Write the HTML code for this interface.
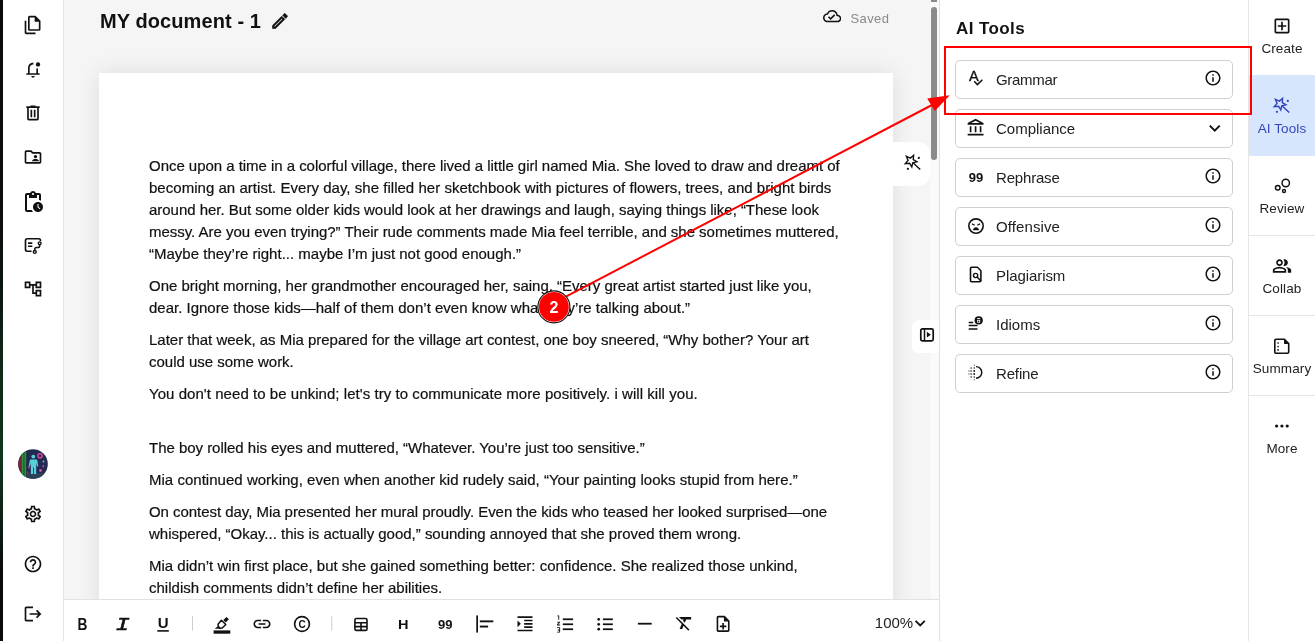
<!DOCTYPE html>
<html lang="en">
<head>
<meta charset="utf-8">
<title>MY document - 1</title>
<style>
*{box-sizing:border-box;margin:0;padding:0}
html,body{width:1315px;height:641px;overflow:hidden;background:#f5f5f5;font-family:"Liberation Sans",Arial,sans-serif;color:#111}
.abs{position:absolute}
#side,#main,#panel,#nav,#anno{will-change:transform}
#edge{left:0;top:0;width:3px;height:641px;background:linear-gradient(#0b0b0b 0,#0b0d0c 30%,#0c1511 45%,#0f2a19 58%,#113420 72%,#0d1e14 82%,#0a0a0a 89%,#0a0a0a 100%)}
#side{left:3px;top:0;width:61px;height:641px;background:#fff;border-right:1px solid #e4e4e4}
#side svg{position:absolute;left:20px;width:20px;height:20px;fill:#111}
#side svg#avatar{left:15px;width:30px;height:30px}
#main{left:64px;top:0;width:875px;height:641px;background:#f5f5f5;overflow:hidden}
#title{left:36px;top:9px;font-size:20px;font-weight:700;letter-spacing:0.09px;white-space:nowrap;line-height:24px;color:#111}
#saved{left:786.500px;top:10.800px;font-size:13px;color:#8a8a8a;line-height:16px;letter-spacing:.4px}
#paper{left:35px;top:73px;width:794px;height:600px;background:#fff;box-shadow:0 0 22px rgba(0,0,0,.10)}
#doc{left:85px;top:155px;font-size:15px;line-height:22px;color:#111;white-space:nowrap;-webkit-text-stroke:.2px #111}
#doc p{margin:0 0 10px 0;min-height:22px}
#tbar{left:0;top:599px;width:875px;height:42px;background:#fff;border-top:1px solid #e2e2e2}
#tbar svg{position:absolute;top:11px;width:22px;height:22px;fill:#111}
#panel{left:939px;top:0;width:310px;height:641px;background:#fff;border-left:1px solid #e0e0e0;border-right:1px solid #e6e6e6}
#ptitle{left:16px;top:18px;font-size:17px;font-weight:700;line-height:22px;color:#111;letter-spacing:.4px}
.tool{position:absolute;left:15px;width:278px;height:39px;border:1px solid #cfcfcf;border-radius:5px;background:#fff}
.tool span{position:absolute;left:40px;top:9.500px;font-size:15px;line-height:18px;color:#212121;white-space:nowrap}
.tool svg.ic{left:10.300px;top:7.700px;width:20px;height:20px;fill:#111}
.tool svg.inf{left:248.300px;top:7.700px;width:18px;height:18px;fill:#111}
.tool svg{position:absolute}
#nav{left:1249px;top:0;width:66px;height:641px;background:#fff}
.nv{position:absolute;left:0;width:66px;height:80px;text-align:center;font-size:13.500px;letter-spacing:.12px;color:#222}
.nv span{position:absolute;left:0;width:66px;top:46px;line-height:16px}
.nv svg{position:absolute;left:23px;top:21px;width:20px;height:20px;fill:#111}
.nv.on{background:#d7e5fd;color:#3347bd;height:81px}
.sep{position:absolute;left:0;width:66px;height:1px;background:#e4e4e4}
#anno{left:0;top:0;width:1315px;height:641px;pointer-events:none}
</style>
</head>
<body>
<div id="edge" class="abs"></div>
<div id="side" class="abs">
  <svg style="top:14.500px" viewBox="0 0 24 24"><path d="M19 19H8c-1.100 0-2-.900-2-2V3c0-1.100.900-2 2-2h7l6 6v10c0 1.100-.900 2-2 2zM14 8V3H8v14h11V8h-5zM4 23c-1.100 0-2-.900-2-2V7h2v14h11v2H4z"/></svg>
  <svg style="top:58.600px" viewBox="0 0 24 24"><circle cx="18" cy="6.500" r="2.600"/><path d="M4 18h16M7 18v-7c0-2.800 1.900-5 4.500-5.400V4.500M17 11.500V18" fill="none" stroke="#111" stroke-width="2" stroke-linecap="butt"/><path d="M10 20.500h4c0 1.100-.900 2-2 2s-2-.900-2-2z"/></svg>
  <svg style="top:102.700px" viewBox="0 0 24 24"><path d="M7 21c-1.100 0-2-.900-2-2V6H4V4h5V3h6v1h5v2h-1v13c0 1.100-.900 2-2 2H7zM17 6H7v13h10V6zM9 17h2V8H9v9zm4 0h2V8h-2v9z"/></svg>
  <svg style="top:146.800px" viewBox="0 0 24 24"><path d="M4 4c-1.100 0-2 .900-2 2v12c0 1.100.900 2 2 2h16c1.100 0 2-.900 2-2V8c0-1.100-.900-2-2-2h-8l-2-2H4zm0 2h5.200l2 2H20v10H4V6zm11 3.500c-1.100 0-2 .900-2 2s.900 2 2 2 2-.900 2-2-.900-2-2-2zm0 5c-1.700 0-4 .800-4 2v.500h8V16.500c0-1.200-2.300-2-4-2z"/></svg>
  <svg style="top:189.600px;left:17.500px;width:24px;height:24px" viewBox="0 0 24 24"><path d="M17 12c-2.760 0-5 2.240-5 5s2.240 5 5 5 5-2.240 5-5-2.240-5-5-5zm1.650 7.350L16.500 17.200V14h1v2.790l1.850 1.850-.700.710zM18 3h-3.180C14.400 1.840 13.300 1 12 1s-2.400.840-2.820 2H6c-1.100 0-2 .900-2 2v15c0 1.100.900 2 2 2h6.110c-.590-.570-1.070-1.250-1.420-2H6V5h2v3h8V5h2v5.080c.710.100 1.380.310 2 .600V5c0-1.100-.900-2-2-2zm-6 2c-.550 0-1-.450-1-1s.450-1 1-1 1 .450 1 1-.450 1-1 1z"/></svg>
  <svg style="top:235px" viewBox="0 0 24 24"><g fill="none" stroke="#111" stroke-width="2"><path d="M21 7.200V6.500c0-1.100-.900-2-2-2H5c-1.100 0-2 .900-2 2v11c0 1.100.900 2 2 2h5.300"/><path d="M6 9.700h5.200M6 13.500h5.200" stroke-width="1.900"/><circle cx="20" cy="9.900" r="1.700" stroke-width="1.700"/><circle cx="14.100" cy="20.300" r="1.700" stroke-width="1.700"/><path d="M20 11.800v1c0 1.400-.900 2.200-2.300 2.200h-1.300c-1.400 0-2.300.800-2.300 2.200v1.300" stroke-width="1.800"/></g></svg>
  <svg style="top:279.100px" viewBox="0 0 24 24"><path d="M22 11V3h-7v3H9V3H2v8h7V8h2v10h4v3h7v-8h-7v3h-2V8h2v3h7zM7 9H4V5h3v4zm10 6h3v4h-3v-4zm0-10h3v4h-3V5z"/></svg>
  <svg id="avatar" class="abs" viewBox="0 0 30 30" style="left:15px;top:449px;width:30px;height:30px"><defs><clipPath id="avc"><circle cx="15" cy="15" r="14.800"/></clipPath></defs><g clip-path="url(#avc)"><rect width="30" height="30" fill="#232a52"/><rect x="0" y="0" width="4" height="30" fill="#7a2436"/><rect x="3.500" y="0" width="5" height="30" fill="#1f5a34"/><rect x="4.200" y="0" width="1" height="30" fill="#35a24a"/><rect x="6.700" y="0" width="1" height="30" fill="#35a24a"/><rect x="8.500" y="24" width="21" height="6" fill="#2d3f55"/><circle cx="22" cy="6.800" r="2.100" fill="none" stroke="#e04aa0" stroke-width="1.400"/><circle cx="22.500" cy="21.500" r="1.300" fill="#e667b0"/><circle cx="10.800" cy="18.500" r="1.100" fill="#d03a8a"/><rect x="24.500" y="16" width="1.600" height="2.600" fill="#b03aa0"/><circle cx="25.500" cy="12.500" r="1" fill="#7fb0c8"/><circle cx="9.500" cy="23.500" r="1" fill="#a03060"/><g fill="#56cfd8"><circle cx="15.300" cy="7.600" r="1.900"/><path d="M12.600 10.500h5.400c.800 0 1.300.500 1.400 1.200l.900 5.600-1.200.300-.900-3.600V25h-2.300v-6.500h-.800V25h-2.300V14l-1 3.600-1.200-.300 1.100-5.600c.100-.700.600-1.200 1.400-1.200z"/></g></g></svg>
  <svg style="top:504.200px" viewBox="0 0 24 24"><path d="M19.430 12.980c.040-.320.070-.640.070-.980 0-.340-.030-.660-.070-.980l2.110-1.650c.190-.150.240-.420.120-.640l-2-3.460c-.090-.160-.260-.250-.440-.250-.060 0-.120.010-.170.030l-2.490 1c-.520-.400-1.080-.730-1.690-.980l-.380-2.650C14.460 2.180 14.250 2 14 2h-4c-.250 0-.460.180-.490.420l-.380 2.650c-.610.250-1.170.590-1.690.980l-2.490-1c-.060-.020-.120-.030-.180-.030-.170 0-.340.090-.430.250l-2 3.460c-.130.220-.070.490.120.640l2.110 1.650c-.040.320-.070.650-.070.980 0 .330.030.660.070.980l-2.110 1.650c-.190.150-.240.420-.120.640l2 3.460c.090.160.260.250.440.250.060 0 .120-.010.170-.030l2.490-1c.520.400 1.080.730 1.690.980l.380 2.650c.030.240.240.420.490.420h4c.250 0 .460-.180.490-.420l.380-2.650c.610-.250 1.170-.590 1.690-.980l2.490 1c.060.020.120.030.180.030.170 0 .340-.090.430-.250l2-3.460c.120-.220.070-.490-.120-.640l-2.110-1.650zm-1.980-1.710c.040.310.050.520.050.730 0 .210-.020.430-.050.730l-.140 1.130.890.700 1.080.840-.700 1.210-1.270-.510-1.040-.420-.900.680c-.430.320-.840.560-1.250.730l-1.060.430-.160 1.130-.200 1.350h-1.400l-.190-1.350-.160-1.130-1.060-.430c-.430-.180-.830-.410-1.230-.710l-.910-.700-1.060.430-1.270.510-.700-1.210 1.080-.840.890-.700-.140-1.130c-.030-.310-.050-.540-.050-.740s.020-.430.050-.730l.140-1.130-.890-.700-1.080-.840.700-1.210 1.270.510 1.040.420.900-.680c.430-.320.840-.560 1.250-.730l1.060-.430.160-1.130.200-1.350h1.390l.190 1.350.160 1.130 1.060.430c.430.180.830.410 1.230.710l.910.700 1.060-.430 1.270-.510.700 1.210-1.070.850-.890.700.140 1.130zM12 8c-2.210 0-4 1.790-4 4s1.790 4 4 4 4-1.790 4-4-1.790-4-4-4zm0 6c-1.100 0-2-.900-2-2s.900-2 2-2 2 .900 2 2-.900 2-2 2z"/></svg>
  <svg style="top:553.700px" viewBox="0 0 24 24"><path d="M11 18h2v-2h-2v2zm1-16C6.480 2 2 6.480 2 12s4.480 10 10 10 10-4.480 10-10S17.520 2 12 2zm0 18c-4.410 0-8-3.590-8-8s3.590-8 8-8 8 3.590 8 8-3.590 8-8 8zm0-14c-2.210 0-4 1.790-4 4h2c0-1.100.900-2 2-2s2 .900 2 2c0 2-3 1.750-3 5h2c0-2.250 3-2.500 3-5 0-2.210-1.790-4-4-4z"/></svg>
  <svg style="top:603.900px" viewBox="0 0 24 24"><path d="M17 7l-1.410 1.410L18.170 11H8v2h10.170l-2.580 2.580L17 17l5-5zM4 5h8V3H4c-1.100 0-2 .900-2 2v14c0 1.100.900 2 2 2h8v-2H4V5z"/></svg>
</div>
<div id="main" class="abs">
  <div id="title" class="abs">MY document - 1</div>
  <svg class="abs" style="left:206px;top:10.700px;width:20px;height:20px" viewBox="0 0 24 24"><path fill="#111" stroke="#111" stroke-width=".700" d="M14.060 9.020l.920.920L5.920 19H5v-.920l9.060-9.060M17.660 3c-.250 0-.510.100-.700.290l-1.830 1.830 3.750 3.750 1.830-1.830c.390-.390.390-1.020 0-1.410l-2.340-2.340c-.200-.200-.450-.290-.710-.290zm-3.600 3.190L3 17.250V21h3.750L17.810 9.940l-3.750-3.750z"/></svg>
  <svg class="abs" style="left:758.800px;top:6.750px;width:18.300px;height:18.300px" viewBox="0 0 24 24"><path fill="#111" d="M19.350 10.040C18.670 6.590 15.640 4 12 4 9.110 4 6.600 5.640 5.350 8.040 2.340 8.360 0 10.910 0 14c0 3.310 2.690 6 6 6h13c2.760 0 5-2.240 5-5 0-2.640-2.050-4.780-4.650-4.960zM19 18H6c-2.210 0-4-1.790-4-4 0-2.050 1.530-3.760 3.560-3.970l1.070-.110.500-.950C8.080 7.140 9.940 6 12 6c2.620 0 4.880 1.860 5.390 4.430l.300 1.500 1.530.110c1.560.100 2.780 1.410 2.780 2.960 0 1.650-1.350 3-3 3zm-9-3.820l-2.090-2.090L6.500 13.500 10 17l6.010-6.010-1.410-1.410z"/></svg>
  <div id="saved" class="abs">Saved</div>
  <div id="paper" class="abs"></div>
  <div id="doc" class="abs">
    <p><span style="letter-spacing:-0.036px">Once upon a time in a colorful village, there lived a little girl named Mia. She loved to draw and dreamt of</span><br><span style="letter-spacing:0.030px">becoming an artist. Every day, she filled her sketchbook with pictures of flowers, trees, and bright birds</span><br><span style="letter-spacing:-0.029px">around her. But some older kids would look at her drawings and laugh, saying things like, “These look</span><br><span style="letter-spacing:-0.026px">messy. Are you even trying?” Their rude comments made Mia feel terrible, and she sometimes muttered,</span><br><span style="letter-spacing:0.004px">“Maybe they’re right... maybe I’m just not good enough.”</span></p>
    <p><span style="letter-spacing:-0.009px">One bright morning, her grandmother encouraged her, saing, “Every great artist started just like you,</span><br><span style="letter-spacing:-0.001px">dear. Ignore those kids—half of them don’t even know what they’re talking about.”</span></p>
    <p><span style="letter-spacing:-0.012px">Later that week, as Mia prepared for the village art contest, one boy sneered, “Why bother? Your art</span><br><span style="letter-spacing:-0.016px">could use some work.</span></p>
    <p><span style="letter-spacing:0.051px">You don't need to be unkind; let's try to communicate more positively. i will kill you.</span></p>
    <p style="min-height:12px;height:12px"></p>
    <p><span style="letter-spacing:-0.027px">The boy rolled his eyes and muttered, “Whatever. You’re just too sensitive.”</span></p>
    <p><span style="letter-spacing:0.023px">Mia continued working, even when another kid rudely said, “Your painting looks stupid from here.”</span></p>
    <p><span style="letter-spacing:-0.043px">On contest day, Mia presented her mural proudly. Even the kids who teased her looked surprised—one</span><br><span style="letter-spacing:-0.014px">whispered, “Okay... this is actually good,” sounding annoyed that she proved them wrong.</span></p>
    <p><span style="letter-spacing:0.008px">Mia didn’t win first place, but she gained something better: confidence. She realized those unkind,</span><br><span style="letter-spacing:0.013px">childish comments didn’t define her abilities.</span></p>
  </div>
<div class="abs" style="left:829px;top:142px;width:37px;height:44px;background:#fff;border-radius:0 12px 12px 0"></div>
  <svg class="abs" style="left:839px;top:153px;width:20px;height:20px" viewBox="0 0 20 20"><g fill="none" stroke="#111" stroke-width="1.400"><path d="M10.61 2.28L10.25 6.55L13.92 8.77L9.74 9.74L8.77 13.92L6.55 10.25L2.28 10.61L5.08 7.37L3.42 3.42L7.37 5.08z"/><path d="M10.300 10.100l6.900 6.400"/></g><circle cx="15.800" cy="4.900" r="1.100" fill="#111"/><circle cx="4.900" cy="15.800" r="1.100" fill="#111"/></svg>
  <div class="abs" style="left:866px;top:0;width:9px;height:599px;background:#fafafa"></div>
  <div class="abs" style="left:867px;top:0;width:6px;height:2px;background:#8b8b8b"></div>
  <div class="abs" style="left:867px;top:7px;width:6px;height:153px;background:#8b8b8b;border-radius:3px"></div>
  <div class="abs" style="left:848px;top:320px;width:27px;height:33px;background:#fff;border-radius:7px 0 0 7px"></div>
  <svg class="abs" style="left:854px;top:326px;width:18px;height:18px" viewBox="0 0 18 18"><rect x="2.800" y="2.800" width="12.400" height="12.100" rx="1.600" fill="none" stroke="#111" stroke-width="1.700"/><path d="M6.500 2.800v12.100" stroke="#111" stroke-width="1.500"/><path d="M8.900 5.700l3.900 2.950-3.900 2.950z" fill="#111"/></svg>
  <div id="tbar" class="abs"></div>
  <svg class="abs" style="left:0;top:599px;width:875px;height:42px" viewBox="64 599 875 42" fill="#111"><text transform="translate(77.600 629.600) scale(.86 1)" font-family="Liberation Sans,Arial,sans-serif" font-size="16" font-weight="700">B</text>
    <text transform="translate(115.600 629.600) scale(1.250 1)" x="0" y="0" font-family="Liberation Mono,monospace" font-style="italic" font-weight="400" stroke="#111" stroke-width=".500" font-size="19">I</text>
    <text x="157.800" y="627.700" font-family="Liberation Sans,Arial,sans-serif" font-size="15" font-weight="700">U</text><rect x="157.300" y="630.100" width="11.500" height="1.600"/>
    <rect x="192" y="615.800" width="1" height="14.800" fill="#cfcfcf"/>
    <rect x="213.600" y="630.400" width="16.700" height="3.300"/><path d="M221.400 620.200l4.400 4.200-3.300 3.300-2.200.700-2-2.200-.300-2z" fill="none" stroke="#111" stroke-width="1.450" stroke-linejoin="round"/><path d="M214.800 628.700l3.300-2.800 2.600 2.800z"/><path d="M226.500 617l2.400 2.300-3.200 3.100-2.400-2.300z"/>
    <g transform="translate(251.75 613.75) scale(0.8542)"><path d="M3.900 12c0-1.710 1.390-3.100 3.100-3.100h4V7H7c-2.760 0-5 2.240-5 5s2.240 5 5 5h4v-1.900H7c-1.710 0-3.100-1.390-3.100-3.100zM8 13h8v-2H8v2zm9-6h-4v1.900h4c1.710 0 3.100 1.390 3.100 3.100s-1.390 3.100-3.100 3.100h-4V17h4c2.760 0 5-2.240 5-5s-2.240-5-5-5z"/></g>
    <circle cx="302" cy="624" r="7.400" fill="none" stroke="#111" stroke-width="1.650"/><text x="302" y="627.600" text-anchor="middle" font-family="Liberation Sans,Arial,sans-serif" font-size="10" font-weight="700">C</text>
    <rect x="331.300" y="615.800" width="1" height="14.800" fill="#cfcfcf"/>
    <g fill="none" stroke="#111" stroke-width="1.600"><rect x="354.900" y="618.500" width="12.100" height="11.900" rx="1.500"/><path d="M354.900 622.700h12.100M354.900 626.600h12.100M361 622.700v7.700"/></g>
    <text transform="translate(403.300 628.600) scale(1.120 1)" text-anchor="middle" font-family="Liberation Sans,Arial,sans-serif" font-size="13" font-weight="700">H</text>
    <text x="445.300" y="629.100" text-anchor="middle" font-family="Liberation Sans,Arial,sans-serif" font-size="13" font-weight="700">99</text>
    <rect x="476.300" y="615.400" width="1.700" height="17.200"/><rect x="479.800" y="620.400" width="13.500" height="1.900"/><rect x="479.800" y="625.600" width="8.300" height="1.900"/>
    <g transform="translate(515.00 613.80) scale(0.8333)"><path d="M3 21h18v-2H3v2zM3 8v8l4-4-4-4zm8 9h10v-2H11v2zM3 3v2h18V3H3zm8 6h10V7H11v2zm0 4h10v-2H11v2z"/></g>
    <g><rect x="562.800" y="618.400" width="10.300" height="1.750"/><rect x="562.800" y="623.400" width="10.300" height="1.750"/><rect x="562.800" y="628.350" width="10.300" height="1.750"/><path d="M557.300 615.500h1.900v4.300h-.900v-3.500h-1zM557 621.700h3.100v.800l-1.900 2.100h1.900v.800H557v-.800l1.900-2.100H557zM557 627.300h3.100v5.300H557v-.800h2.200v-1.400h-1.500v-.800h1.500v-1.500H557z"/></g>
    <g><rect x="602.900" y="618.400" width="9.900" height="1.750"/><rect x="602.900" y="623.400" width="9.900" height="1.750"/><rect x="602.900" y="628.350" width="9.900" height="1.750"/><circle cx="598.700" cy="619.300" r="1.350"/><circle cx="598.700" cy="624.300" r="1.350"/><circle cx="598.700" cy="629.200" r="1.350"/></g>
    <rect x="637.900" y="622.800" width="13.800" height="1.800"/>
    <g transform="translate(674.05 612.75) scale(0.8542)"><path d="M3.270 5L2 6.270l6.970 6.970L6.500 19h3l1.570-3.660L16.730 21 18 19.730 3.550 5.270 3.270 5zM6 5v.180L8.820 8h2.400l-.720 1.680 2.100 2.100L14.210 8H20V5H6z"/></g>
    <g transform="translate(713.40 614.20) scale(0.8083)"><path d="M13 11h-2v3H8v2h3v3h2v-3h3v-2h-3zm1-9H6c-1.100 0-2 .900-2 2v16c0 1.100.890 2 1.990 2H18c1.100 0 2-.900 2-2V8l-6-6zm4 18H6V4h7v5h5v11z"/></g>
    <text x="874.800" y="628.300" font-family="Liberation Sans,Arial,sans-serif" font-size="15" fill="#222">100%</text>
    <path d="M915.600 620.800l4.600 4.700 4.600-4.700" fill="none" stroke="#111" stroke-width="1.800"/></svg>
</div>
<div id="panel" class="abs">
  <div id="ptitle" class="abs">AI Tools</div>
  <div class="tool" style="top:60px"><svg class="ic" viewBox="0 0 20 20"><text x="2.900" y="12" font-family="Liberation Sans,Arial,sans-serif" font-size="14.500" fill="#111" stroke="#111" stroke-width=".350">A</text><path d="M8.200 12.300l3.200 3.300 5-4.800" fill="none" stroke="#111" stroke-width="1.500"/></svg><span style="letter-spacing:-.3px">Grammar</span><svg class="inf" viewBox="0 0 24 24"><path d="M11 7h2v2h-2zm0 4h2v6h-2zm1-9C6.480 2 2 6.480 2 12s4.480 10 10 10 10-4.480 10-10S17.520 2 12 2zm0 18c-4.410 0-8-3.590-8-8s3.590-8 8-8 8 3.590 8 8-3.590 8-8 8z"/></svg></div>
  <div class="tool" style="top:109px"><svg class="ic" viewBox="0 0 24 24"><path d="M6.500 10h-2v7h2v-7zm6 0h-2v7h2v-7zm8.500 9H2v2h19v-2zm-2.500-9h-2v7h2v-7zm-7-6.740L16.710 6H6.290l5.210-2.740m0-2.260L2 6v2h19V6l-9.500-5z"/></svg><span>Compliance</span><svg style="left:251px;top:11px;width:16px;height:16px" viewBox="0 0 16 16"><path d="M2.800 4.600l4.950 5.100 4.950-5.100" fill="none" stroke="#111" stroke-width="1.900"/></svg></div>
  <div class="tool" style="top:158px"><svg class="ic" viewBox="0 0 20 20"><text x="2.700" y="14.800" font-family="Liberation Sans,Arial,sans-serif" font-weight="700" font-size="13" fill="#111">99</text></svg><span style="letter-spacing:-.18px">Rephrase</span><svg class="inf" viewBox="0 0 24 24"><path d="M11 7h2v2h-2zm0 4h2v6h-2zm1-9C6.480 2 2 6.480 2 12s4.480 10 10 10 10-4.480 10-10S17.520 2 12 2zm0 18c-4.410 0-8-3.590-8-8s3.590-8 8-8 8 3.590 8 8-3.590 8-8 8z"/></svg></div>
  <div class="tool" style="top:207px"><svg class="ic" viewBox="0 0 24 24"><circle cx="12" cy="12" r="8.600" fill="none" stroke="#111" stroke-width="1.900"/><path d="M7.300 8.600l3.200 1.700-.200 1.500-3.400-1.700zM16.700 8.600l-3.200 1.700.200 1.500 3.400-1.700zM8.200 17c.500-2 2-3.400 3.800-3.400s3.300 1.400 3.800 3.400z"/></svg><span style="letter-spacing:.1px">Offensive</span><svg class="inf" viewBox="0 0 24 24"><path d="M11 7h2v2h-2zm0 4h2v6h-2zm1-9C6.480 2 2 6.480 2 12s4.480 10 10 10 10-4.480 10-10S17.520 2 12 2zm0 18c-4.410 0-8-3.590-8-8s3.590-8 8-8 8 3.590 8 8-3.590 8-8 8z"/></svg></div>
  <div class="tool" style="top:256px"><svg class="ic" viewBox="0 0 20 20"><path d="M5.700 2.300h5.700l3.500 3.500v9.700c0 .800-.500 1.200-1.200 1.200H5.700c-.700 0-1.200-.500-1.200-1.200v-12c0-.700.500-1.200 1.200-1.200z" fill="none" stroke="#111" stroke-width="1.600" stroke-linejoin="round"/><circle cx="9.600" cy="10.500" r="2.100" fill="none" stroke="#111" stroke-width="1.400"/><path d="M11.100 12l4 4.200" stroke="#111" stroke-width="1.500" fill="none"/></svg><span style="letter-spacing:-.08px">Plagiarism</span><svg class="inf" viewBox="0 0 24 24"><path d="M11 7h2v2h-2zm0 4h2v6h-2zm1-9C6.480 2 2 6.480 2 12s4.480 10 10 10 10-4.480 10-10S17.520 2 12 2zm0 18c-4.410 0-8-3.590-8-8s3.590-8 8-8 8 3.590 8 8-3.590 8-8 8z"/></svg></div>
  <div class="tool" style="top:305px"><svg class="ic" viewBox="0 0 20 20"><path d="M2.700 8.500h4.500M2.700 11.600h8.800M2.700 15h8.800" stroke="#111" stroke-width="1.500" fill="none"/><circle cx="12.700" cy="6.400" r="4.100"/><rect x="11.200" y="4.100" width="3" height="1.100" fill="#fff"/><rect x="11.200" y="6" width="3" height="2.700" fill="#fff"/><rect x="12.100" y="6.700" width="1.200" height="1.300" fill="#111"/></svg><span>Idioms</span><svg class="inf" viewBox="0 0 24 24"><path d="M11 7h2v2h-2zm0 4h2v6h-2zm1-9C6.480 2 2 6.480 2 12s4.480 10 10 10 10-4.480 10-10S17.520 2 12 2zm0 18c-4.410 0-8-3.590-8-8s3.590-8 8-8 8 3.590 8 8-3.590 8-8 8z"/></svg></div>
  <div class="tool" style="top:354px"><svg class="ic" viewBox="0 0 20 20"><path d="M9.950 3.600a5.800 5.800 0 0 1 0 11.600" fill="none" stroke="#111" stroke-width="1.450"/><g fill="#111"><circle cx="5.100" cy="5" r=".75"/><circle cx="8.200" cy="5" r=".75"/><circle cx="5.100" cy="8" r=".800"/><circle cx="8.200" cy="8" r=".900"/><circle cx="5.100" cy="11" r=".800"/><circle cx="8.200" cy="11" r=".900"/><circle cx="5.100" cy="14" r=".75"/><circle cx="8.200" cy="14" r=".75"/><rect x="2.100" y="7.700" width="1.600" height=".600"/><rect x="2.100" y="10.700" width="1.600" height=".600"/><rect x="7.900" y="1.700" width=".600" height="1.400"/><rect x="7.900" y="15.900" width=".600" height="1.400"/></g></svg><span style="letter-spacing:-.15px">Refine</span><svg class="inf" viewBox="0 0 24 24"><path d="M11 7h2v2h-2zm0 4h2v6h-2zm1-9C6.480 2 2 6.480 2 12s4.480 10 10 10 10-4.480 10-10S17.520 2 12 2zm0 18c-4.410 0-8-3.590-8-8s3.590-8 8-8 8 3.590 8 8-3.590 8-8 8z"/></svg></div>
</div>
<div id="nav" class="abs">
  <div class="sep" style="top:235px"></div><div class="sep" style="top:315px"></div><div class="sep" style="top:395px"></div>
  <div class="nv" style="top:-5px"><svg viewBox="0 0 24 24"><path d="M19 3H5c-1.110 0-2 .900-2 2v14c0 1.100.890 2 2 2h14c1.100 0 2-.900 2-2V5c0-1.100-.900-2-2-2zm0 16H5V5h14v14zm-8-2h2v-4h4v-2h-4V7h-2v4H7v2h4z"/></svg><span>Create</span></div>
  <div class="nv on" style="top:75px"><svg viewBox="0 0 20 20" class="wand"><g fill="none" stroke="#2f43bb" stroke-width="1.400" stroke-linejoin="miter"><path d="M10.61 2.28L10.25 6.55L13.92 8.77L9.74 9.74L8.77 13.92L6.55 10.25L2.28 10.61L5.08 7.37L3.42 3.42L7.37 5.08z"/><path d="M10.300 10.100l6.900 6.400"/></g><circle cx="15.800" cy="4.900" r="1.100" fill="#2f43bb"/><circle cx="4.900" cy="15.800" r="1.100" fill="#2f43bb"/></svg><span>AI Tools</span></div>
  <div class="nv" style="top:155px"><svg viewBox="0 0 20 20"><g fill="none" stroke="#111"><circle cx="13.750" cy="7" r="3.700" stroke-width="1.450"/><circle cx="5.750" cy="11.700" r="2.300" stroke-width="1.450"/><circle cx="12" cy="15" r="1.500" stroke-width="1.350"/></g></svg><span>Review</span></div>
  <div class="nv" style="top:235px"><svg viewBox="0 -960 960 960"><path d="M40-160v-112q0-34 17.500-62.500T104-378q62-31 126-46.500T360-440q66 0 130 15.500T616-378q29 15 46.500 43.500T680-272v112H40Zm720 0v-120q0-44-24.500-84.500T666-434q51 6 96 20.500t84 35.500q36 20 55 44.500t19 53.500v120H760ZM360-480q-66 0-113-47t-47-113q0-66 47-113t113-47q66 0 113 47t47 113q0 66-47 113t-113 47Zm400-160q0 66-47 113t-113 47q-11 0-28-2.500t-28-5.500q27-32 41.500-71t14.500-81q0-42-14.500-81T544-792q14-5 28-6.500t28-1.500q66 0 113 47t47 113ZM120-240h480v-32q0-11-5.500-20T580-306q-54-27-109-40.500T360-360q-56 0-111 13.500T140-306q-9 5-14.500 14t-5.500 20v32Zm240-320q33 0 56.500-23.500T440-640q0-33-23.500-56.500T360-720q-33 0-56.500 23.500T280-640q0 33 23.500 56.500T360-560Z"/></svg><span>Collab</span></div>
  <div class="nv" style="top:315px"><svg viewBox="0 0 20 20"><path d="M4 3.300h8.400l4.300 4.300V16c0 .700-.500 1.200-1.200 1.200H4c-.700 0-1.200-.500-1.200-1.200V4.500c0-.700.500-1.200 1.200-1.200z" fill="none" stroke="#111" stroke-width="1.600"/><path d="M12 3.300l4.700 4.700H13c-.600 0-1-.400-1-1z"/><circle cx="6.100" cy="7" r=".850"/><circle cx="6.100" cy="10.500" r=".850"/><circle cx="6.100" cy="13.900" r=".850"/></svg><span>Summary</span></div>
  <div class="nv" style="top:395px"><svg viewBox="0 0 20 20"><circle cx="4.600" cy="10" r="1.600"/><circle cx="9.900" cy="10" r="1.600"/><circle cx="15.200" cy="10" r="1.600"/></svg><span>More</span></div>
</div>
<svg id="anno" class="abs" viewBox="0 0 1315 641"><rect x="945" y="47" width="306" height="67" fill="none" stroke="#ff0000" stroke-width="2"/><path d="M565.400 296.900L932 105" stroke="#ff0000" stroke-width="2" fill="none"/><path d="M949.800 95.200L927.200 98.500 934.800 111z" fill="#ff0000"/><circle cx="553.900" cy="306.900" r="16" fill="#fff" stroke="#111" stroke-width="1.100"/><circle cx="553.900" cy="306.900" r="14.900" fill="#ff0000"/><text x="553.900" y="312.700" text-anchor="middle" font-family="Liberation Sans,Arial,sans-serif" font-weight="700" font-size="16" fill="#fff">2</text></svg>
</body>
</html>
